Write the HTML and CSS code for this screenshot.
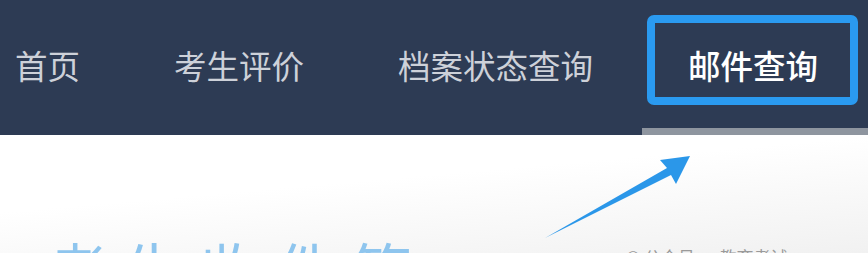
FILE: index.html
```html
<!DOCTYPE html>
<html lang="zh-CN">
<head>
<meta charset="utf-8">
<title>邮件查询</title>
<link rel="stylesheet" href="styles.css">
</head>
<body>
<nav class="nav">
  <a class="nav-item">首页</a>
  <a class="nav-item">考生评价</a>
  <a class="nav-item">档案状态查询</a>
  <a class="nav-item active">邮件查询<span class="highlight"></span></a>
</nav>
<main class="main">
  <h1 class="title">考生收件箱</h1>
  <p class="caption">© 公众号 · 教育考试</p>
</main>
<svg class="arrow" width="868" height="253" viewBox="0 0 868 253">
  <polygon points="690,156 660,160 667,168 545,238 671,175 676,184" fill="#2b97e9"/>
</svg>
</body>
</html>
```
FILE: styles.css
```css
html, body {
  margin: 0;
  padding: 0;
}
body {
  position: relative;
  width: 868px;
  height: 253px;
  overflow: hidden;
  background: #fdfdfd;
  font-family: "Noto Sans CJK SC", "Noto Sans", sans-serif;
}
.nav {
  display: flex;
  height: 135px;
  margin-left: -32px;
  background: #2d3b54;
}
.nav-item {
  position: relative;
  padding: 44px 47px 0;
  font-size: 32.5px;
  line-height: 42px;
  color: #cdd1d9;
  white-space: nowrap;
}
.nav-item.active {
  width: 130px;
  margin-left: 2px;
  padding-left: 46px;
  padding-right: 50px;
  box-sizing: content-box;
  color: #ffffff;
  font-weight: 500;
  border-bottom: 7px solid #8e959f;
  height: 84px;
}
.highlight {
  position: absolute;
  left: 5px;
  right: 10px;
  top: 15px;
  height: 90px;
  box-sizing: border-box;
  border: 8px solid #2a9af0;
  border-radius: 7px;
}
.main {
  display: flex;
  align-items: flex-start;
  height: 118px;
  padding: 103px 0 0 48px;
  box-sizing: border-box;
  background: linear-gradient(175deg, #ffffff 40%, #f1f1f1 100%);
}
.title {
  margin: 0;
  font-size: 60px;
  line-height: 60px;
  font-weight: 400;
  letter-spacing: 16px;
  color: #8ec5ee;
  white-space: nowrap;
}
.caption {
  margin: 9px 0 0 198px;
  font-size: 17px;
  line-height: 20px;
  color: #9a9a9a;
  white-space: nowrap;
}
.arrow {
  position: absolute;
  left: 0;
  top: 0;
}
```
